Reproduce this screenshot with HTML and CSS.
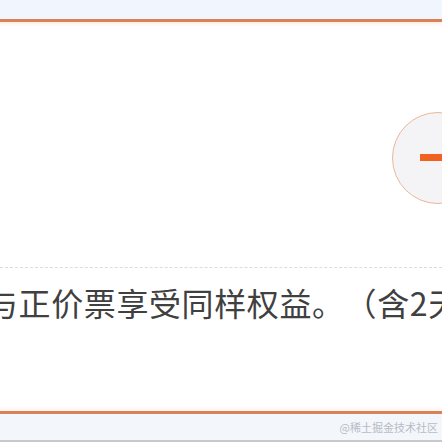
FILE: index.html
```html
<!DOCTYPE html>
<html lang="zh">
<head>
<meta charset="utf-8">
<link rel="stylesheet" href="styles.css">
</head>
<body>
<div class="page">
  <div class="top-strip"></div>
  <div class="card">
    <div class="row">
      <div class="stepper">
        <span class="minus"></span>
      </div>
    </div>
    <div class="divider"></div>
    <div class="desc">与正价票享受同样权益。（含2天</div>
  </div>
  <div class="bottom-strip">
    <span class="mark">@稀土掘金技术社区</span>
  </div>
</div>
</body>
</html>
```
FILE: styles.css
```css
html, body {
  margin: 0;
  padding: 0;
  width: 442px;
  height: 442px;
  overflow: hidden;
  background: #ffffff;
}
.page {
  display: flex;
  flex-direction: column;
  height: 442px;
  font-family: "Noto Sans CJK SC", "Noto Sans", sans-serif;
}
.top-strip {
  height: 19px;
  background: linear-gradient(#f1f6fe 0, #f1f6fe 16px, #eef3fa 19px);
  flex: none;
}
.card {
  flex: 1;
  border-top: 3px solid #d9825a;
  border-bottom: 3px solid #d9825a;
  background: linear-gradient(#fdeee2 0, #fffaf6 3px, #ffffff 6px, #ffffff calc(100% - 5px), #fef4ec 100%);
  overflow: hidden;
  display: flex;
  flex-direction: column;
}
.row {
  height: 245px;
  display: flex;
  align-items: center;
  justify-content: flex-end;
}
.stepper {
  width: 92px;
  height: 92px;
  flex: none;
  border-radius: 50%;
  border: 1.5px solid #ecb79a;
  background: #f4f3f5;
  margin-right: -42px;
  margin-top: 26px;
  display: flex;
  align-items: center;
  padding-left: 27px;
  box-sizing: border-box;
}
.minus {
  width: 30px;
  height: 7px;
  background: #f0621f;
}
.divider {
  border-top: 1px dashed #dcdcdc;
  margin: 0;
}
.desc {
  margin-top: 14px;
  margin-left: -14px;
  white-space: nowrap;
  font-size: 32px;
  line-height: 40px;
  color: #404040;
  letter-spacing: 0.6px;
  text-spacing-trim: space-all;
}
.bottom-strip {
  height: 26px;
  background: #f3f6fb;
  border-bottom: 2px solid #c8c8c8;
  flex: none;
  display: flex;
  justify-content: flex-end;
  align-items: center;
  padding-right: 4px;
}
.mark {
  font-family: "Noto Sans CJK SC", sans-serif;
  font-size: 11px;
  color: #b8bcc4;
}
```
